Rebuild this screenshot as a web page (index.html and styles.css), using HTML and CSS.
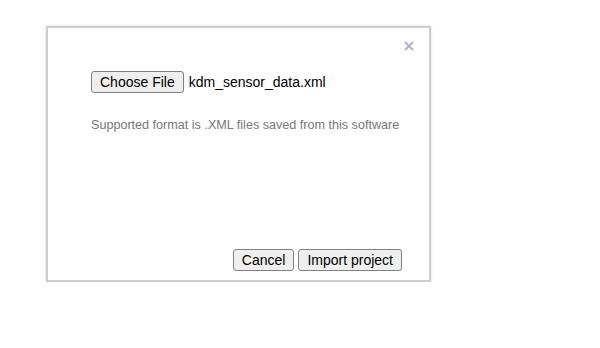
FILE: index.html
```html
<!DOCTYPE html>
<html lang="en">
<head>
    <meta charset="UTF-8">
    <title>Import project</title>
    <link rel="stylesheet" href="styles.css">
</head>
<body>
    <div class="dialog">
        <button class="dialog__close" type="button" aria-label="Close">
            <svg width="10" height="10" viewBox="0 0 10 10">
                <path d="M1 1 L9 9 M9 1 L1 9" stroke="#aab4ca" stroke-width="2"/>
            </svg>
        </button>
        <div class="dialog__content">
            <div class="file-row">
                <button class="btn" type="button">Choose File</button>
                <span class="file-row__name">kdm_sensor_data.xml</span>
            </div>
            <p class="hint">Supported format is .XML files saved from this software</p>
        </div>
        <div class="dialog__footer">
            <button class="btn" type="button">Cancel</button>
            <button class="btn" type="submit">Import project</button>
        </div>
    </div>
</body>
</html>
```

FILE: styles.css
```css
* {
    box-sizing: border-box;
}
html, body {
    margin: 0;
    padding: 0;
    font-family: "Liberation Sans", Arial, sans-serif;
    background: #fff;
}
body {
    padding: 26px 0 0 46px;
}
.dialog {
    position: relative;
    width: 385px;
    height: 256px;
    border: 2px solid #cdcdcd;
    box-shadow: 0 0 3px rgba(0, 0, 0, .15);
    background: #fff;
    display: flex;
    flex-direction: column;
    padding: 43px 27px 9px 43px;
}
.dialog__close {
    position: absolute;
    top: 13px;
    right: 15px;
    padding: 0;
    border: none;
    background: none;
    line-height: 0;
    cursor: pointer;
}
.dialog__content {
    flex: 1;
}
.file-row {
    display: flex;
    align-items: center;
    gap: 5px;
}
.file-row__name {
    font-size: 14px;
    color: #000;
}
.btn {
    font-family: "Liberation Sans", Arial, sans-serif;
    font-size: 14px;
    height: 22px;
    padding: 0 8px;
    color: #000;
    background: #efefef;
    border: 1px solid #808080;
    border-radius: 3px;
    cursor: pointer;
}
.hint {
    margin: 25px 0 0;
    font-size: 12.6px;
    white-space: nowrap;
    color: #777;
}
.dialog__footer {
    display: flex;
    justify-content: flex-end;
    gap: 4px;
}
```
